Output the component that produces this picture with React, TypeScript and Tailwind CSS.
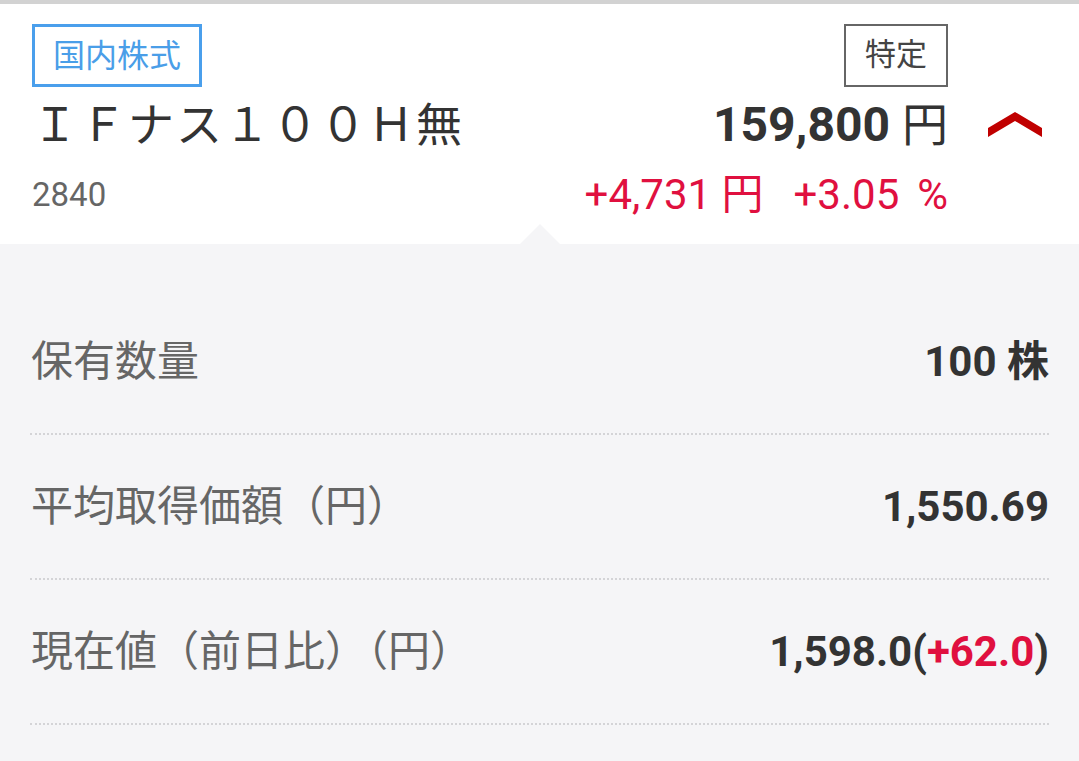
export default function App() {
  const rows = [
    { label: "保有数量", value: <span>100 株</span> },
    { label: "平均取得価額（円）", value: <span>1,550.69</span> },
    {
      label: "現在値（前日比）（円）",
      value: (
        <span>
          1,598.0(<span className="text-[#e0103f]">+62.0</span>)
        </span>
      ),
    },
  ];

  return (
    <div
      className="min-h-[761px] w-[1079px] bg-[#f5f5f7]"
      style={{ fontFamily: 'Roboto, "Noto Sans CJK JP", sans-serif' }}
    >
      {/* top strip */}
      <div className="h-[4px] bg-[#d2d2d2]" />

      {/* header card */}
      <div className="relative flex h-[240px] bg-white pl-[32px]">
        <div className="flex flex-1 flex-col items-start pt-[20px]">
          <div className="flex h-[63px] items-center border-[3px] border-[#4a9fec] px-[18px] text-[32px] text-[#4a9ee8]">
            国内株式
          </div>
          <div className="text-[46px] leading-[76px] tracking-[2px] text-[#333]">
            ＩＦナス１００Ｈ無
          </div>
          <div className="text-[33px] leading-[64px] text-[#666]">2840</div>
        </div>

        <div className="flex flex-col items-end pt-[20px]">
          <div className="flex h-[63px] items-center border-[2px] border-[#666] px-[19px] text-[31px] text-[#444]">
            特定
          </div>
          <div className="flex items-baseline leading-[76px] text-[#333]">
            <span className="text-[48px] font-bold">159,800</span>
            <span className="ml-[12px] text-[46px]">円</span>
          </div>
          <div className="flex items-baseline text-[42px] leading-[64px] text-[#e0103f]">
            <span>+4,731 円</span>
            <span className="ml-[30px]">+3.05</span>
            <span className="ml-[18px]">%</span>
          </div>
        </div>

        <div className="w-[131px] pl-[38px] pt-[106px]">
          <svg width="58" height="30" viewBox="0 0 58 30">
            <polygon points="2,18 29,2 56,18 56,27 29,11 2,27" fill="#c00000" />
          </svg>
        </div>

        {/* pointer notch */}
        <div className="absolute bottom-0 left-[520px] h-0 w-0 border-x-[20px] border-b-[20px] border-x-transparent border-b-[#f5f5f7]" />
      </div>

      {/* detail rows */}
      <div className="px-[30px] pt-[46px]">
        {rows.map((r) => (
          <div
            key={r.label}
            className="flex h-[145px] items-center justify-between border-b-[2px] border-dotted border-[#d4d4d7] pl-[1px]"
          >
            <span className="text-[42px] text-[#666]">{r.label}</span>
            <span className="text-[42px] font-bold text-[#333]">{r.value}</span>
          </div>
        ))}
      </div>
    </div>
  );
}
